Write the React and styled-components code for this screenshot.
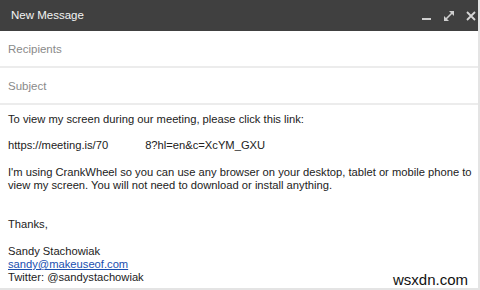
import React from 'react';
import styled, { createGlobalStyle } from 'styled-components';

const Global = createGlobalStyle`
  html, body { margin: 0; padding: 0; background: #ffffff; }
  body { font-family: 'Liberation Sans', Arial, sans-serif; }
`;

const Window = styled.div`
  width: 480px;
  height: 290px;
  box-sizing: border-box;
  display: flex;
  flex-direction: column;
  background: #ffffff;
  border-right: 2px solid #e4e4e4;
  border-bottom: 2px solid #e4e4e4;
  position: relative;
`;

const TitleBar = styled.div`
  height: 31px;
  flex: none;
  background: #404040;
  display: flex;
  align-items: center;
  justify-content: space-between;
  padding: 0 1px 0 11px;
  box-sizing: border-box;
`;

const Title = styled.span`
  color: #f4f4f4;
  font-size: 11.5px;
  margin-top: -2px;
`;

const Controls = styled.div`
  display: flex;
  align-items: center;
  gap: 10px;
`;

const Field = styled.div`
  height: 35px;
  flex: none;
  display: flex;
  align-items: center;
  padding: 0 8px;
  border-bottom: 2px solid #ececec;
  color: #8a8a8a;
  font-size: 11.5px;
`;

const Body = styled.div`
  flex: 1;
  padding: 8px 4px 0 8px;
  color: #222222;
  font-size: 11.2px;
  line-height: 13px;
`;

const Para = styled.p`
  margin: 0 0 ${p => p.gap || 13}px 0;
  white-space: nowrap;
`;

const Gap = styled.span`
  display: inline-block;
  width: ${p => p.w}px;
`;

const Link = styled.a`
  color: #1a4fb0;
  text-decoration: underline;
`;

const Watermark = styled.span`
  position: absolute;
  right: 10px;
  bottom: 0px;
  font-size: 15px;
  color: #111;
  background: #fff;
`;

const Minimize = () => (
  <svg width="12" height="12" viewBox="0 0 12 12">
    <rect x="1" y="8" width="9" height="2" fill="#cfcfcf" />
  </svg>
);

const Expand = () => (
  <svg width="12" height="12" viewBox="0 0 12 12" fill="#cfcfcf">
    <path d="M3 9 L9 3" stroke="#cfcfcf" strokeWidth="1.6" />
    <path d="M6 1 H11 V6 Z" />
    <path d="M1 6 V11 H6 Z" />
  </svg>
);

const Close = () => (
  <svg width="12" height="12" viewBox="0 0 12 12">
    <path d="M2 2 L10 10 M10 2 L2 10" stroke="#d6d6d6" strokeWidth="1.8" />
  </svg>
);

export default function App() {
  return (
    <Window>
      <Global />
      <TitleBar>
        <Title>New Message</Title>
        <Controls>
          <Minimize />
          <Expand />
          <Close />
        </Controls>
      </TitleBar>
      <Field>Recipients</Field>
      <Field>Subject</Field>
      <Body>
        <Para>To view my screen during our meeting, please click this link:</Para>
        <Para gap={14}>https://meeting.is/70<Gap w={37} />8?hl=en&amp;c=XcYM_GXU</Para>
        <Para gap={26}>
          I'm using CrankWheel so you can use any browser on your desktop, tablet or mobile phone to<br />
          view my screen. You will not need to download or install anything.
        </Para>
        <Para gap={14}>Thanks,</Para>
        <Para>
          Sandy Stachowiak<br />
          <Link href="#">sandy@makeuseof.com</Link><br />
          Twitter: @sandystachowiak
        </Para>
      </Body>
      <Watermark>wsxdn.com</Watermark>
    </Window>
  );
}
